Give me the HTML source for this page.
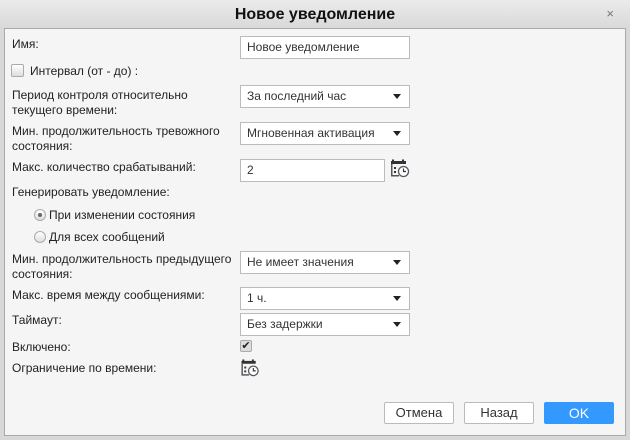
<!DOCTYPE html>
<html><head><meta charset="utf-8"><style>
*{box-sizing:border-box}
body{margin:0;width:630px;height:440px;background:#d8d8d8;font-family:"Liberation Sans",sans-serif;font-size:12px;color:#222;position:relative;overflow:hidden}
.title{position:absolute;left:0;top:0;width:630px;height:28px;background:linear-gradient(#ebebeb,#d9d9d9);text-align:center;font-weight:bold;font-size:16px;line-height:29px;color:#111}
.x{position:absolute;right:16px;top:7px;font-size:13px;color:#777;font-weight:normal;line-height:14px}
.panel{position:absolute;left:4px;top:28px;width:622px;height:408px;background:#f5f5f5;border:1px solid #aaa}
.a{position:absolute;white-space:nowrap;line-height:15px}
.in{position:absolute;left:240px;width:170px;height:23px;background:#fff;border:1px solid #bbb;padding-left:6px;line-height:21px;color:#333}
.dd:after{content:"";position:absolute;right:8px;top:8px;border-left:4px solid transparent;border-right:4px solid transparent;border-top:5px solid #222}
.btn{position:absolute;top:402px;height:22px;width:70px;border:1px solid #bbb;background:#fff;text-align:center;line-height:20px;font-size:13px;color:#333;border-radius:2px}
.rad{position:absolute;width:12px;height:12px;border-radius:50%;border:1px solid #aaa;background:linear-gradient(#fff,#ddd)}
</style></head><body>
<div class="title">Новое уведомление<span class="x">×</span></div>
<div class="panel"></div>
<div class="a" style="left:12px;top:37px">Имя:</div>
<div class="in" style="top:36px">Новое уведомление</div>
<div class="a" style="left:11px;top:64px;width:13px;height:13px;border:1px solid #aaa;background:linear-gradient(#fff,#ddd);border-radius:2px"></div>
<div class="a" style="left:30px;top:64px">Интервал (от - до) :</div>
<div class="a" style="left:12px;top:88px">Период контроля относительно<br>текущего времени:</div>
<div class="in dd" style="top:85px">За последний час</div>
<div class="a" style="left:12px;top:124px">Мин. продолжительность тревожного<br>состояния:</div>
<div class="in dd" style="top:122px">Мгновенная активация</div>
<div class="a" style="left:12px;top:160px">Макс. количество срабатываний:</div>
<div class="in" style="top:159px;width:145px">2</div>
<svg class="a" style="left:390px;top:159px" width="20" height="20" viewBox="0 0 20 20"><rect x="1" y="2" width="15" height="3" fill="#333"/><rect x="2" y="0.5" width="2" height="3" fill="#333"/><rect x="12" y="0.5" width="2" height="3" fill="#333"/><rect x="1" y="5" width="1.5" height="12" fill="#555"/><rect x="1" y="16" width="8" height="1.5" fill="#555"/><rect x="4" y="8" width="2" height="2" fill="#333"/><rect x="4" y="12" width="2" height="2" fill="#333"/><circle cx="13.5" cy="12.5" r="5" fill="#fff" stroke="#556" stroke-width="1.3"/><path d="M13.5 9.5v3h2.5" stroke="#333" fill="none" stroke-width="1.2"/></svg>
<div class="a" style="left:12px;top:185px">Генерировать уведомление:</div>
<div class="rad" style="left:34px;top:209px"><div style="position:absolute;left:3px;top:3px;width:4px;height:4px;border-radius:50%;background:#666"></div></div>
<div class="a" style="left:49px;top:208px">При изменении состояния</div>
<div class="rad" style="left:34px;top:231px"></div>
<div class="a" style="left:49px;top:230px">Для всех сообщений</div>
<div class="a" style="left:12px;top:252px">Мин. продолжительность предыдущего<br>состояния:</div>
<div class="in dd" style="top:251px">Не имеет значения</div>
<div class="a" style="left:12px;top:288px">Макс. время между сообщениями:</div>
<div class="in dd" style="top:287px">1 ч.</div>
<div class="a" style="left:12px;top:313px">Таймаут:</div>
<div class="in dd" style="top:313px">Без задержки</div>
<div class="a" style="left:12px;top:340px">Включено:</div>
<div class="a" style="left:240px;top:340px;width:12px;height:12px;border:1px solid #aaa;background:#ddd;border-radius:2px;font-size:11px;line-height:10px;text-align:center">✔</div>
<div class="a" style="left:12px;top:361px">Ограничение по времени:</div>
<svg class="a" style="left:240px;top:359px" width="20" height="19" viewBox="0 0 20 20"><rect x="1" y="2" width="15" height="3" fill="#333"/><rect x="2" y="0.5" width="2" height="3" fill="#333"/><rect x="12" y="0.5" width="2" height="3" fill="#333"/><rect x="1" y="5" width="1.5" height="12" fill="#555"/><rect x="1" y="16" width="8" height="1.5" fill="#555"/><rect x="4" y="8" width="2" height="2" fill="#333"/><rect x="4" y="12" width="2" height="2" fill="#333"/><circle cx="13.5" cy="12.5" r="5" fill="#fff" stroke="#556" stroke-width="1.3"/><path d="M13.5 9.5v3h2.5" stroke="#333" fill="none" stroke-width="1.2"/></svg>
<div class="btn" style="left:384px">Отмена</div>
<div class="btn" style="left:464px">Назад</div>
<div class="btn" style="left:544px;background:#3399ff;border-color:#3399ff;color:#fff;font-size:14px">OK</div>
</body></html>
